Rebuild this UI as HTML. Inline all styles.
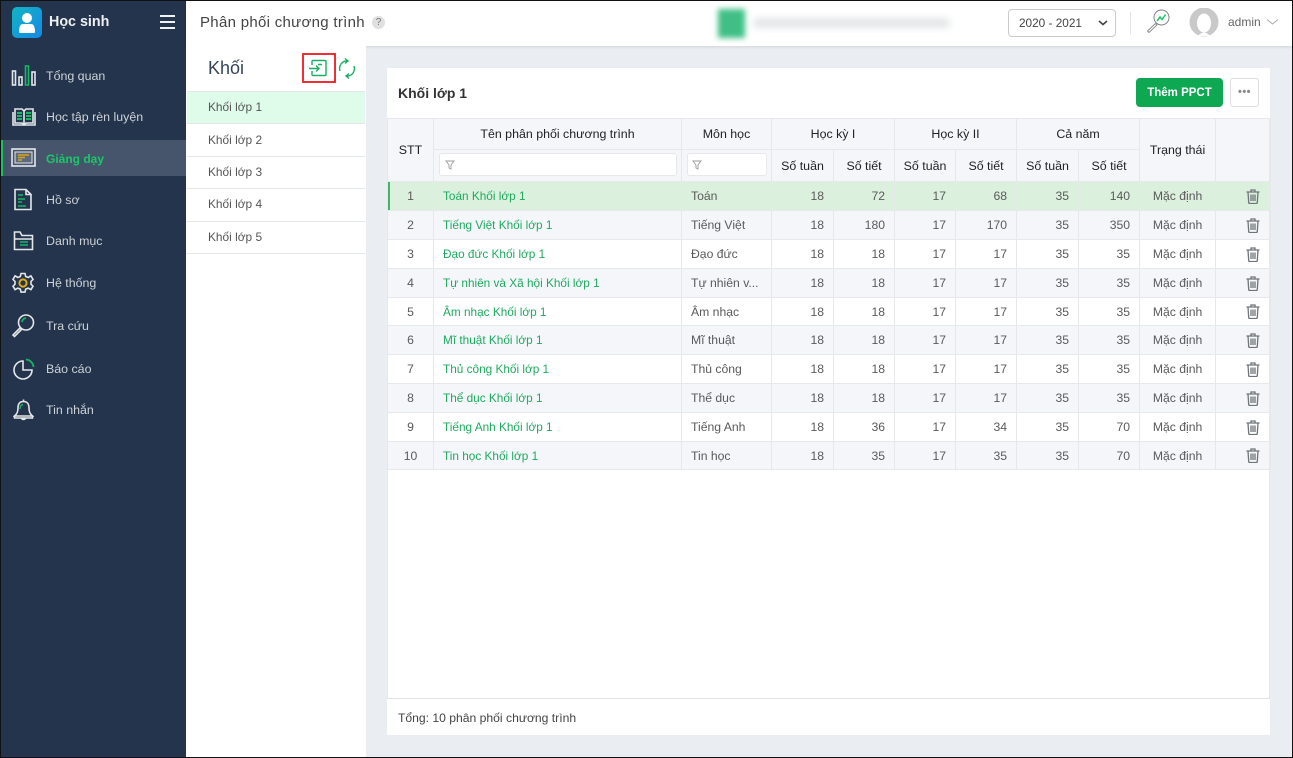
<!DOCTYPE html>
<html lang="vi"><head><meta charset="utf-8"><title>Phân phối chương trình</title>
<style>
*{box-sizing:border-box}
html,body{margin:0;padding:0}
body{width:1293px;height:758px;position:relative;overflow:hidden;background:#eaeef2;font-family:"Liberation Sans",sans-serif;font-size:12.2px;color:#555}
.a{position:absolute}
.frame{position:absolute;left:0;top:0;width:1293px;height:758px;border:1px solid #111;z-index:20;pointer-events:none}
#side{position:absolute;left:0;top:0;width:186px;height:758px;background:#24344c}
.m{position:absolute;left:46px;color:#cdd2d8;font-size:12.4px;line-height:18px;white-space:nowrap}
.ic{position:absolute;fill:none;stroke:#e4e7ea;stroke-width:1.6}
#hdr{position:absolute;left:186px;top:0;width:1107px;height:46px;background:#fff;box-shadow:0 1px 3px rgba(0,0,0,.1)}
#pan{position:absolute;left:186px;top:46px;width:180px;height:712px;background:#fff}
.li{position:absolute;left:187px;width:178px;border-bottom:1px solid #e3e6ea;padding-left:21px;font-size:11.9px;color:#555}
#card{position:absolute;left:387px;top:68px;width:883px;height:667px;background:#fff}
table{position:absolute;left:387px;top:118px;width:883px;border-collapse:collapse;table-layout:fixed;color:#5a5a5a;font-size:12.2px}
td,th{border:1px solid #e6e8ec;padding:0 9px;white-space:nowrap;overflow:hidden}
th{background:#f5f6fa;font-weight:normal;color:#222;text-align:center;padding:0;font-size:12.4px}
tr.o td{background:#fff}
tr.e td{background:#f4f6fa}
tr.s td{background:#dcf0de}
td.c{text-align:center}
td.r{text-align:right}
td.g{color:#1eaa5f;font-size:11.8px}
.flt{position:absolute;height:23px;background:#fff;border:1px solid #e6e8ec;border-radius:3px}
svg.t{display:block;margin:0 0 0 21px}
</style></head>
<body>
<svg width="0" height="0" style="position:absolute"><defs>
<symbol id="tr" viewBox="0 0 14 15"><g fill="none" stroke="#6f7478" stroke-width="1.3"><path d="M.5 3h13M5 3V1h4v2M2 3l.7 10.5q.1 1 1 1h6.6q.9 0 1-1L12 3"/><path d="M5 5.5v6.5M7 5.5v6.5M9 5.5v6.5"/></g></symbol>
<symbol id="fl" viewBox="0 0 10 10"><path d="M1 1h8L6 5v4L4 8V5z" fill="none" stroke="#999" stroke-width=".9"/></symbol>
</defs></svg>

<div id="side"></div>
<div class="a" style="left:12px;top:7px;width:30px;height:31px;border-radius:5px;background:linear-gradient(135deg,#12b5c4,#1588e6)"></div>
<svg class="a" style="left:12px;top:7px" width="30" height="31"><circle cx="15" cy="11" r="5" fill="#fff"/><path d="M7 25q0-8 4-8h8q4 0 4 8q0 1-1 1H8q-1 0-1-1z" fill="#fff"/></svg>
<div class="a" style="left:49px;top:13px;color:#eef0f2;font-size:14.3px;font-weight:bold;line-height:18px">Học sinh</div>
<div class="a" style="left:160px;top:15px;width:15px;height:2px;background:#f2f2f2"></div>
<div class="a" style="left:160px;top:21px;width:15px;height:2px;background:#f2f2f2"></div>
<div class="a" style="left:160px;top:27px;width:15px;height:2px;background:#f2f2f2"></div>

<div class="a" style="left:1px;top:140px;width:185px;height:36px;background:#46556b"></div>
<div class="a" style="left:1px;top:140px;width:2px;height:36px;background:#12c564"></div>

<svg class="ic" style="left:11px;top:64px" width="26" height="22"><rect x="1.500" y="7" width="3" height="14"/><rect x="8" y="13" width="3" height="8"/><rect x="14.500" y="2" width="3" height="19" stroke="#17b566"/><rect x="21" y="8" width="3" height="13"/></svg>
<div class="m" style="top:67px">Tổng quan</div>
<svg class="ic" style="left:12px;top:106px" width="24" height="22"><path d="M3 3h7l2 2 2-2h7v14h-7l-2 2-2-2H3zM12 5v14M1 6v13h22V6"/><path d="M5 7h5M5 10h5M5 13h5M14 7h5M14 10h5M14 13h5" stroke="#17b566" stroke-width="2"/></svg>
<div class="m" style="top:108px">Học tập rèn luyện</div>
<svg class="ic" style="left:11px;top:148px" width="25" height="20"><rect x="1" y="1" width="23" height="17"/><rect x="4" y="4" width="17" height="11" fill="#5c6a7d" stroke-width="1"/><path d="M7 7h11M7 9.500h7M7 12h4" stroke="#d9a520" stroke-width="1.500"/></svg>
<div class="m" style="top:150px;color:#18c968;font-weight:bold;font-size:12px">Giảng dạy</div>
<svg class="ic" style="left:13px;top:188px" width="20" height="23"><path d="M2 1.500h11l5 5v15H2zM13 1.500v5h5"/><path d="M5 7h5M5 11h7M5 14h4M5 18h8" stroke="#17b566" stroke-width="1.500"/></svg>
<div class="m" style="top:191px">Hồ sơ</div>
<svg class="ic" style="left:13px;top:230px" width="21" height="21"><path d="M1.500 3V19.500h18V5.500H9L7 2H1.500zM1.500 9h18"/><path d="M7 12h8M7 15h8" stroke="#17b566" stroke-width="1.500"/></svg>
<div class="m" style="top:232px">Danh mục</div>
<svg class="ic" style="left:12px;top:272px" width="22" height="22"><path d="M9 1.500h4l.7 3 2.500 1 2.700-1.600 2.100 3.500-2 2v2.800l2 2-2.100 3.500-2.700-1.600-2.500 1-.7 3H9l-.7-3-2.500-1-2.700 1.600L1 14.200l2-2V9.400l-2-2 2.100-3.500 2.700 1.600 2.500-1z"/><circle cx="11" cy="11" r="3.600" stroke="#e2ac10" stroke-width="2"/></svg>
<div class="m" style="top:274px">Hệ thống</div>
<svg class="ic" style="left:11px;top:313px" width="24" height="25" stroke-width="1.300"><circle cx="15" cy="9.500" r="7.500"/><path d="M9 15l-7 7 1.500 1.500 7-7z"/><path d="M11 9a4.500 4.500 0 0 1 4-4" stroke="#17b566" stroke-width="1.800"/></svg>
<div class="m" style="top:317px">Tra cứu</div>
<svg class="ic" style="left:13px;top:358px" width="22" height="22"><path d="M10 3a9 9 0 1 0 9 9h-9z"/><path d="M13 1.500a8 8 0 0 1 7.500 7.500" stroke="#17b566" stroke-width="1.800"/></svg>
<div class="m" style="top:360px">Báo cáo</div>
<svg class="ic" style="left:13px;top:398px" width="21" height="24"><path d="M10.500 1.500v2M10.500 3.500C6 3.500 5 7 5 10c0 4-1 6-3.500 8h18C17 16 16 14 16 10c0-3-1-6.500-5.500-6.500zM1.500 18v2h18v-2M8 20q2.500 3 5 0"/><path d="M7 11c0-3 1-4 3-4.500" stroke="#17b566" stroke-width="1.500"/></svg>
<div class="m" style="top:401px">Tin nhắn</div>

<div id="hdr"></div>
<div class="a" style="left:200px;top:14px;font-size:15px;color:#444;line-height:18px;letter-spacing:.3px">Phân phối chương trình</div>
<div class="a" style="left:372px;top:16px;width:13px;height:13px;border-radius:50%;background:#e0e0e0;color:#777;font-size:10px;text-align:center;line-height:13px">?</div>
<div class="a" style="left:718px;top:9px;width:27px;height:29px;background:#3fbf85;filter:blur(3px)"></div>
<div class="a" style="left:754px;top:19px;width:195px;height:8px;background:#dcdfe1;filter:blur(4px)"></div>
<div class="a" style="left:1008px;top:9px;width:108px;height:28px;border:1px solid #ccc;border-radius:4px;background:#fff;font-size:11.8px;color:#444;line-height:27px;padding-left:10px">2020 - 2021</div>
<svg class="a" style="left:1097px;top:19px" width="12" height="8"><path d="M2 2l4 3.500L10 2" fill="none" stroke="#444" stroke-width="1.600"/></svg>
<div class="a" style="left:1130px;top:12px;width:1px;height:22px;background:#e3e3e3"></div>
<svg class="a" style="left:1145px;top:8px" width="26" height="27" fill="none"><circle cx="16.500" cy="9.500" r="7.500" stroke="#777" stroke-width=".9"/><path d="M10.500 15.500l-8 7.500 1.500 1.500 8-7.500z" stroke="#888" stroke-width=".9"/><path d="M12 13l3-4 2 2.500 3.500-5" stroke="#19c868" stroke-width="1.500"/></svg>
<svg class="a" style="left:1189px;top:8px" width="30" height="29"><circle cx="15" cy="14" r="14.500" fill="#c9c9c9"/><ellipse cx="15" cy="15" rx="7" ry="9.500" fill="#fff"/><path d="M9 28q6-7 12 0z" fill="#fff"/></svg>
<div class="a" style="left:1228px;top:14px;font-size:12px;color:#666;line-height:16px">admin</div>
<svg class="a" style="left:1266px;top:18px" width="13" height="8"><path d="M1 1.500l5.500 4.500L12 1.500" fill="none" stroke="#aaa" stroke-width="1"/></svg>

<div id="pan"></div>
<div class="a" style="left:208px;top:58px;font-size:18px;color:#34465c;line-height:21px">Khối</div>
<div class="a" style="left:302px;top:53px;width:34px;height:30px;border:2px solid #ee2f36"></div>
<svg class="a" style="left:308px;top:59px" width="20" height="19" fill="none" stroke="#1dae62" stroke-width="1.400"><path d="M4 6V2.500q0-1 1-1h12q1 0 1 1v13q0 1-1 1H5q-1 0-1-1V12"/><path d="M1 9.500h10M8 6.500l3 3-3 3M10 5.500h4"/></svg>
<svg class="a" style="left:338px;top:58px" width="18" height="21" fill="none" stroke="#1dae62" stroke-width="1.400"><path d="M2 13A7.500 7.500 0 0 1 8 3h2M7 .5l3 2.500-3 2.500"/><path d="M16 8a7.500 7.500 0 0 1-6 10H8M11 20.500L8 18l3-2.500"/></svg>
<div class="a" style="left:187px;top:91px;width:178px;height:1px;background:#e3e6ea"></div>
<div class="li" style="top:92px;height:32px;line-height:31px;background:#dffbea">Khối lớp 1</div>
<div class="li" style="top:124px;height:33px;line-height:33px">Khối lớp 2</div>
<div class="li" style="top:157px;height:32px;line-height:31px">Khối lớp 3</div>
<div class="li" style="top:189px;height:33px;line-height:31px">Khối lớp 4</div>
<div class="li" style="top:222px;height:32px;line-height:31px">Khối lớp 5</div>

<div id="card"></div>
<div class="a" style="left:398px;top:84px;font-size:14px;font-weight:bold;color:#333;line-height:18px">Khối lớp 1</div>
<div class="a" style="left:1136px;top:78px;width:87px;height:29px;border-radius:4px;background:#0ea752;color:#fff;font-weight:bold;font-size:11.500px;text-align:center;line-height:30px">Thêm PPCT</div>
<div class="a" style="left:1230px;top:78px;width:29px;height:29px;border-radius:3px;border:1px solid #ddd;background:#fff;color:#888;text-align:center;font-size:11px;line-height:26px;font-weight:bold;letter-spacing:.5px">•••</div>

<table>
<colgroup><col style="width:46px"><col style="width:248px"><col style="width:90px"><col style="width:62px"><col style="width:61px"><col style="width:61px"><col style="width:61px"><col style="width:62px"><col style="width:61px"><col style="width:76px"><col style="width:55px"></colgroup>
<tr style="height:31px"><th rowspan="2">STT</th><th>Tên phân phối chương trình</th><th>Môn học</th><th colspan="2">Học kỳ I</th><th colspan="2">Học kỳ II</th><th colspan="2">Cả năm</th><th rowspan="2">Trạng thái</th><th rowspan="2"></th></tr>
<tr style="height:32px"><th></th><th></th><th>Số tuần</th><th>Số tiết</th><th>Số tuần</th><th>Số tiết</th><th>Số tuần</th><th>Số tiết</th></tr>
<tr class="s" style="height:29px"><td class="c" style="box-shadow:inset 2px 0 0 #3fb765">1</td><td class="g">Toán Khối lớp 1</td><td>Toán</td><td class="r">18</td><td class="r">72</td><td class="r">17</td><td class="r">68</td><td class="r">35</td><td class="r">140</td><td class="c">Mặc định</td><td><svg class="t" width="14" height="15"><use href="#tr"/></svg></td></tr>
<tr class="e" style="height:29px"><td class="c">2</td><td class="g">Tiếng Việt Khối lớp 1</td><td>Tiếng Việt</td><td class="r">18</td><td class="r">180</td><td class="r">17</td><td class="r">170</td><td class="r">35</td><td class="r">350</td><td class="c">Mặc định</td><td><svg class="t" width="14" height="15"><use href="#tr"/></svg></td></tr>
<tr class="o" style="height:29px"><td class="c">3</td><td class="g">Đạo đức Khối lớp 1</td><td>Đạo đức</td><td class="r">18</td><td class="r">18</td><td class="r">17</td><td class="r">17</td><td class="r">35</td><td class="r">35</td><td class="c">Mặc định</td><td><svg class="t" width="14" height="15"><use href="#tr"/></svg></td></tr>
<tr class="e" style="height:29px"><td class="c">4</td><td class="g">Tự nhiên và Xã hội Khối lớp 1</td><td>Tự nhiên v...</td><td class="r">18</td><td class="r">18</td><td class="r">17</td><td class="r">17</td><td class="r">35</td><td class="r">35</td><td class="c">Mặc định</td><td><svg class="t" width="14" height="15"><use href="#tr"/></svg></td></tr>
<tr class="o" style="height:28px"><td class="c">5</td><td class="g">Âm nhạc Khối lớp 1</td><td>Âm nhạc</td><td class="r">18</td><td class="r">18</td><td class="r">17</td><td class="r">17</td><td class="r">35</td><td class="r">35</td><td class="c">Mặc định</td><td><svg class="t" width="14" height="15"><use href="#tr"/></svg></td></tr>
<tr class="e" style="height:29px"><td class="c">6</td><td class="g">Mĩ thuật Khối lớp 1</td><td>Mĩ thuật</td><td class="r">18</td><td class="r">18</td><td class="r">17</td><td class="r">17</td><td class="r">35</td><td class="r">35</td><td class="c">Mặc định</td><td><svg class="t" width="14" height="15"><use href="#tr"/></svg></td></tr>
<tr class="o" style="height:29px"><td class="c">7</td><td class="g">Thủ công Khối lớp 1</td><td>Thủ công</td><td class="r">18</td><td class="r">18</td><td class="r">17</td><td class="r">17</td><td class="r">35</td><td class="r">35</td><td class="c">Mặc định</td><td><svg class="t" width="14" height="15"><use href="#tr"/></svg></td></tr>
<tr class="e" style="height:29px"><td class="c">8</td><td class="g">Thể dục Khối lớp 1</td><td>Thể dục</td><td class="r">18</td><td class="r">18</td><td class="r">17</td><td class="r">17</td><td class="r">35</td><td class="r">35</td><td class="c">Mặc định</td><td><svg class="t" width="14" height="15"><use href="#tr"/></svg></td></tr>
<tr class="o" style="height:29px"><td class="c">9</td><td class="g">Tiếng Anh Khối lớp 1</td><td>Tiếng Anh</td><td class="r">18</td><td class="r">36</td><td class="r">17</td><td class="r">34</td><td class="r">35</td><td class="r">70</td><td class="c">Mặc định</td><td><svg class="t" width="14" height="15"><use href="#tr"/></svg></td></tr>
<tr class="e" style="height:28px"><td class="c">10</td><td class="g">Tin học Khối lớp 1</td><td>Tin học</td><td class="r">18</td><td class="r">35</td><td class="r">17</td><td class="r">35</td><td class="r">35</td><td class="r">70</td><td class="c">Mặc định</td><td><svg class="t" width="14" height="15"><use href="#tr"/></svg></td></tr>
</table>
<div class="flt" style="left:439px;top:153px;width:238px"></div>
<svg class="a" style="left:445px;top:160px" width="10" height="10"><use href="#fl"/></svg>
<div class="flt" style="left:687px;top:153px;width:80px"></div>
<svg class="a" style="left:692px;top:160px" width="10" height="10"><use href="#fl"/></svg>

<div class="a" style="left:387px;top:118px;width:1px;height:581px;background:#e6e8ec"></div>
<div class="a" style="left:1269px;top:118px;width:1px;height:581px;background:#e6e8ec"></div>
<div class="a" style="left:387px;top:698px;width:883px;height:1px;background:#dfe2e6"></div>
<div class="a" style="left:398px;top:710px;font-size:12.150px;color:#444;line-height:17px">Tổng: 10 phân phối chương trình</div>

<div class="frame"></div>
</body></html>
